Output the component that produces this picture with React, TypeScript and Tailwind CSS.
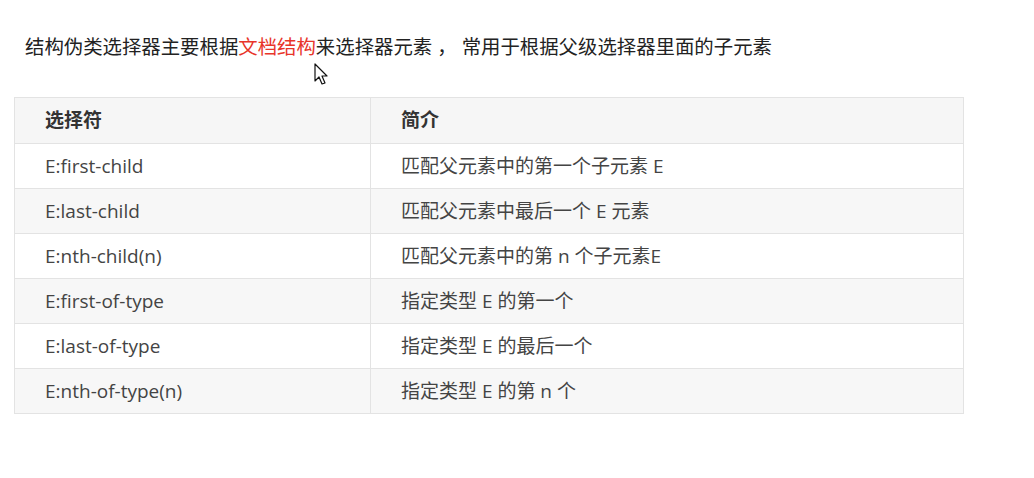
import React from "react";

const rows: [string, string][] = [
  ["E:first-child", "匹配父元素中的第一个子元素 E"],
  ["E:last-child", "匹配父元素中最后一个 E 元素"],
  ["E:nth-child(n)", "匹配父元素中的第 n 个子元素E"],
  ["E:first-of-type", "指定类型 E 的第一个"],
  ["E:last-of-type", "指定类型 E 的最后一个"],
  ["E:nth-of-type(n)", "指定类型 E 的第 n 个"],
];

export default function App() {
  return (
    <div
      className="relative w-[1034px] h-[478px] bg-white text-[#333]"
      style={{ fontFamily: '"Open Sans", "Noto Sans CJK SC", sans-serif' }}
    >
      <div className="pt-[33px] pl-[25px] text-[19.4px] leading-[28px] text-[#222]">
        结构伪类选择器主要根据<span className="text-[#e8352a]">文档结构</span>来选择器元素 ， 常用于根据父级选择器里面的子元素
      </div>
      <div className="ml-[14px] mt-[36px] w-[950px]">
        <table className="w-full border-collapse border border-[#e3e3e3] text-[19px]">
          <thead>
            <tr className="bg-[#f6f6f6] h-[46px]">
              <th className="w-[356px] border border-[#e3e3e3] pl-[30px] text-left font-bold text-[#333]">选择符</th>
              <th className="border border-[#e3e3e3] pl-[30px] text-left font-bold text-[#333]">简介</th>
            </tr>
          </thead>
          <tbody>
            {rows.map(([a, b], i) => (
              <tr key={a} className={i % 2 === 1 ? "bg-[#f7f7f7] h-[45px]" : "bg-white h-[45px]"}>
                <td className="border border-[#e3e3e3] pl-[30px] text-[#444]">{a}</td>
                <td className="border border-[#e3e3e3] pl-[30px] text-[#444]">{b}</td>
              </tr>
            ))}
          </tbody>
        </table>
      </div>
      <svg className="absolute left-[314px] top-[63px]" width="16" height="24" viewBox="0 0 16 24">
        <path d="M1 1 L1 18 L5 14 L8 21 L11 20 L8 13 L13 13 Z" fill="white" stroke="#111" strokeWidth="1.2" strokeLinejoin="round" />
      </svg>
    </div>
  );
}
